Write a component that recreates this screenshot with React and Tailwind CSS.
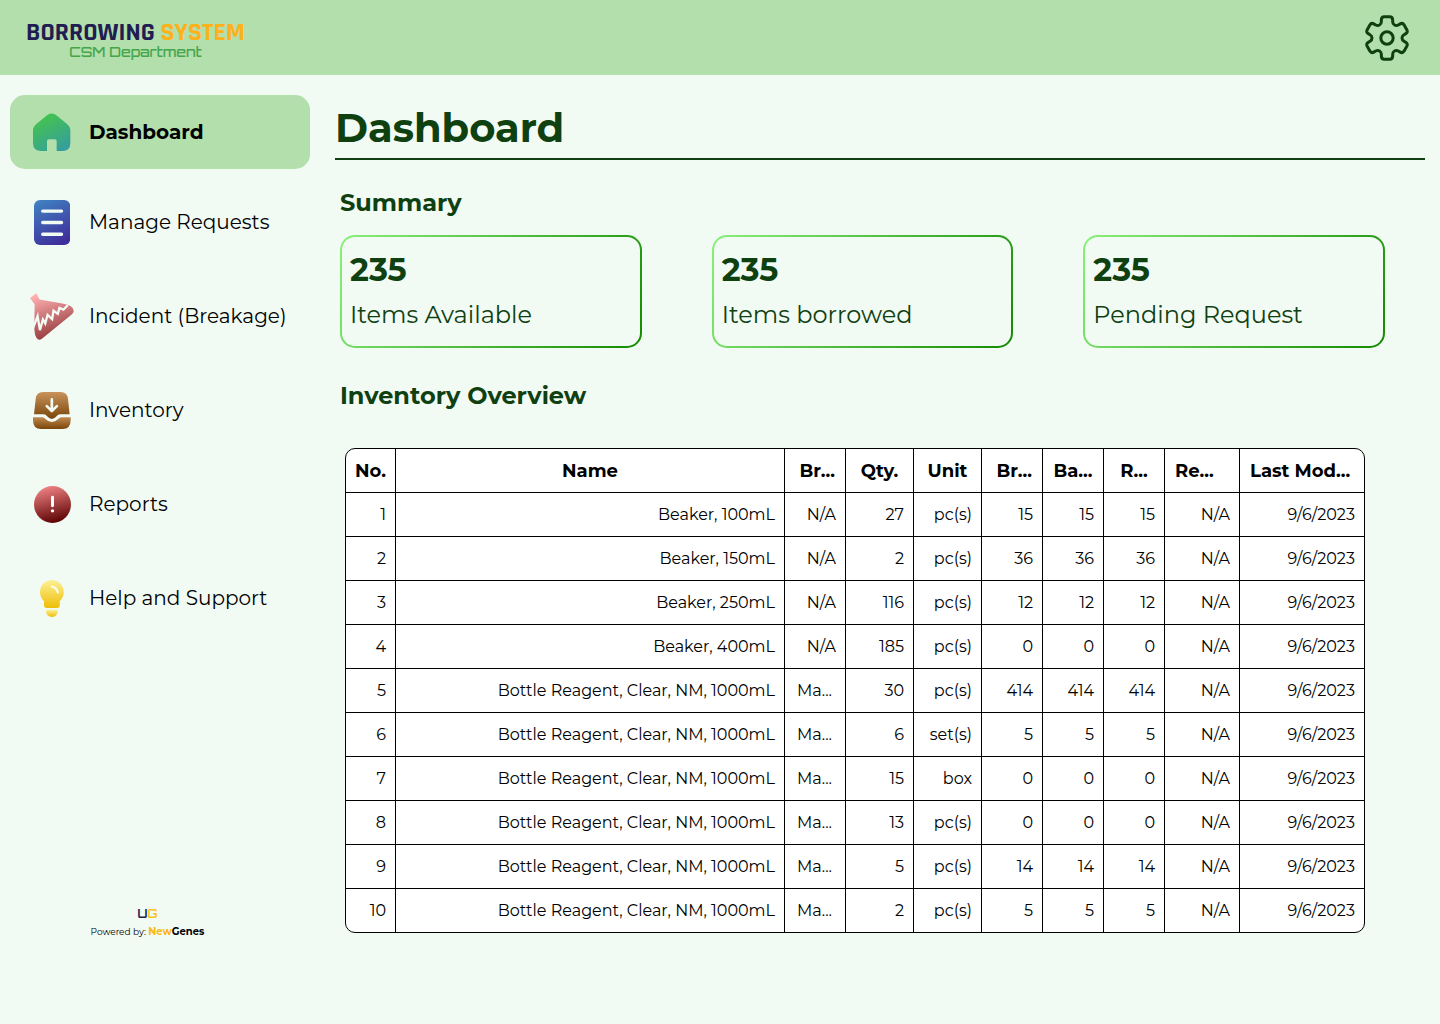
import React from "react";

const rotate = (deg, x, y) => {
  const a = (deg * Math.PI) / 180;
  const c = Math.cos(a);
  const s = Math.sin(a);
  return `${(x * c - y * s).toFixed(2)} ${(x * s + y * c).toFixed(2)}`;
};

const toothPath = (deg) => {
  const p = (x, y) => rotate(deg, x, y);
  return [
    `C ${p(-19, -41)} ${p(-17, -43)} ${p(-17, -49)}`,
    `L ${p(-17, -54)} Q ${p(-17, -64)} ${p(-8, -64)}`,
    `L ${p(8, -64)} Q ${p(17, -64)} ${p(17, -54)}`,
    `L ${p(17, -49)} C ${p(17, -43)} ${p(19, -41)} ${p(22.5, -39)}`,
  ].join(" ");
};

const gearPath = `M ${rotate(0, -22.5, -39)} ${[0, 60, 120, 180, 240, 300].map(toothPath).join(" ")} Z`;

function GearIcon() {
  return (
    <svg viewBox="-72 -72 144 144" className="size-12" fill="none" stroke="#0f4010" strokeWidth="9" strokeLinejoin="round">
      <path d={gearPath} />
      <circle r="18.5" />
    </svg>
  );
}

function HomeIcon() {
  return (
    <svg viewBox="0 0 112 114" className="h-[38px]">
      <defs>
        <linearGradient id="home" x1="0.25" y1="0" x2="0.8" y2="1">
          <stop offset="0.1" stopColor="#43c253" />
          <stop offset="1" stopColor="#359d9e" />
        </linearGradient>
      </defs>
      <path
        fill="url(#home)"
        d="M44 5Q56-2 68 5L102 33Q112 41 112 52V90Q112 114 88 114H71V85Q71 79 65 79H48Q42 79 42 85V114H24Q0 114 0 90V52Q0 41 10 33Z"
      />
    </svg>
  );
}

function RequestsIcon() {
  return (
    <svg viewBox="0 0 108 134" className="h-[45px]">
      <defs>
        <linearGradient id="requests" x1="0.2" y1="0" x2="0.6" y2="1">
          <stop offset="0" stopColor="#4080c0" />
          <stop offset="1" stopColor="#3f2f9c" />
        </linearGradient>
      </defs>
      <rect width="108" height="134" rx="18" fill="url(#requests)" />
      <path d="M26 33H82M26 67H82M26 102H82" stroke="#f1fbf4" strokeWidth="10" strokeLinecap="round" />
    </svg>
  );
}

function BreakageIcon() {
  return (
    <svg viewBox="0 0 132 142" className="h-[47px]">
      <defs>
        <linearGradient id="breakage" x1="0.3" y1="0" x2="0.6" y2="1">
          <stop offset="0" stopColor="#ffb0b0" />
          <stop offset="1" stopColor="#8f3236" />
        </linearGradient>
      </defs>
      <path
        fill="url(#breakage)"
        d="M0 15L19 1L29 20L98 32Q132 38 132 54Q132 60 126 65L36 138Q26 145 20 136Q13 126 13 102L14 34Z"
      />
      <path
        d="M10 104L23 70L30 112L39 80L46 92L53 66L67 79L71 53L84 63L89 45L101 50L114 37"
        fill="none"
        stroke="#f1fbf4"
        strokeWidth="7"
      />
    </svg>
  );
}

function InventoryIcon() {
  return (
    <svg viewBox="0 0 112 110" className="h-[37px]">
      <defs>
        <linearGradient id="boxTop" x1="0" y1="0" x2="0" y2="1">
          <stop offset="0" stopColor="#c9945c" />
          <stop offset="1" stopColor="#7a4508" />
        </linearGradient>
        <linearGradient id="boxBase" x1="0" y1="0" x2="0" y2="1">
          <stop offset="0" stopColor="#c08a50" />
          <stop offset="1" stopColor="#7a4508" />
        </linearGradient>
      </defs>
      <path fill="url(#boxTop)" d="M8 20Q10 0 30 0H82Q102 0 104 20L109 66H80Q74 66 70 72Q56 88 42 72Q38 66 32 66H3Z" />
      <path fill="url(#boxBase)" d="M0 75H28Q33 75 37 80Q56 99 75 80Q79 75 84 75H112V84Q112 110 88 110H24Q0 110 0 84Z" />
      <path d="M56 22V55M41 42L56 57L71 42" fill="none" stroke="#f1fbf4" strokeWidth="8" strokeLinecap="round" strokeLinejoin="round" />
    </svg>
  );
}

function ReportsIcon() {
  return (
    <svg viewBox="0 0 112 112" className="h-[37px]">
      <defs>
        <linearGradient id="reports" x1="0.35" y1="0" x2="0.6" y2="1">
          <stop offset="0" stopColor="#f08284" />
          <stop offset="1" stopColor="#5a0000" />
        </linearGradient>
      </defs>
      <circle cx="56" cy="56" r="56" fill="url(#reports)" />
      <path d="M56 34V60" stroke="#fff" strokeWidth="9" strokeLinecap="round" />
      <circle cx="56" cy="75" r="5" fill="#fff" />
    </svg>
  );
}

function HelpIcon() {
  return (
    <svg viewBox="0 0 72 112" className="h-[37px]">
      <defs>
        <linearGradient id="bulb" x1="0" y1="0" x2="0" y2="1">
          <stop offset="0" stopColor="#fdf196" />
          <stop offset="1" stopColor="#efbd06" />
        </linearGradient>
      </defs>
      <path fill="url(#bulb)" d="M36 0C56 0 72 16 72 37C72 50 66 57 60 64V75Q60 85 51 85H21Q12 85 12 75V64C6 57 0 50 0 37C0 16 16 0 36 0Z" />
      <path fill="url(#bulb)" d="M18 90H54Q54 112 36 112Q18 112 18 90Z" />
      <path d="M36 20Q50 22 54 37" fill="none" stroke="#fffbe0" strokeWidth="7" strokeLinecap="round" />
    </svg>
  );
}

const navItems = [
  { label: "Manage Requests", Icon: RequestsIcon },
  { label: "Incident (Breakage)", Icon: BreakageIcon },
  { label: "Inventory", Icon: InventoryIcon },
  { label: "Reports", Icon: ReportsIcon },
  { label: "Help and Support", Icon: HelpIcon },
];

const stats = [
  { value: 235, label: "Items Available" },
  { value: 235, label: "Items borrowed" },
  { value: 235, label: "Pending Request" },
];

const columns = [
  { label: "No.", head: "w-[50px] text-center" },
  { label: "Name", head: "text-center" },
  { label: "Br...", head: "w-[61px] pr-2.5 text-right" },
  { label: "Qty.", head: "w-[68px] text-center" },
  { label: "Unit", head: "w-[68px] text-center" },
  { label: "Br...", head: "w-[61px] pr-2.5 text-right" },
  { label: "Ba...", head: "w-[61px] text-center" },
  { label: "R...", head: "w-[61px] text-center" },
  { label: "Re...", head: "w-[75px] pl-2.5 text-left" },
  { label: "Last Mod...", head: "w-[124px] pl-2.5 text-left" },
];

const bottle = "Bottle Reagent, Clear, NM, 1000mL";
const rows = [
  ["Beaker, 100mL", "N/A", 27, "pc(s)", 15],
  ["Beaker, 150mL", "N/A", 2, "pc(s)", 36],
  ["Beaker, 250mL", "N/A", 116, "pc(s)", 12],
  ["Beaker, 400mL", "N/A", 185, "pc(s)", 0],
  [bottle, "Ma...", 30, "pc(s)", 414],
  [bottle, "Ma...", 6, "set(s)", 5],
  [bottle, "Ma...", 15, "box", 0],
  [bottle, "Ma...", 13, "pc(s)", 0],
  [bottle, "Ma...", 5, "pc(s)", 14],
  [bottle, "Ma...", 2, "pc(s)", 5],
];

function InventoryTable() {
  return (
    <div className="mt-9 mr-[60px] ml-2.5 overflow-hidden rounded-[10px] border border-black bg-white text-black">
      <table className="w-full table-fixed border-separate border-spacing-0">
        <thead>
          <tr className="h-11">
            {columns.map((c, i) => (
              <th key={i} scope="col" className={`border-r border-b border-black text-lg font-bold whitespace-nowrap last:border-r-0 ${c.head}`}>
                {c.label}
              </th>
            ))}
          </tr>
        </thead>
        <tbody className="[&>tr:last-child>td]:border-b-0">
          {rows.map(([name, brand, qty, unit, count], r) => (
            <tr key={r} className="h-11 last:h-[43px]">
              {[r + 1, name, brand, qty, unit, count, count, count, "N/A", "9/6/2023"].map((v, i) => (
                <td
                  key={i}
                  className={`border-r border-b border-black text-right text-base whitespace-nowrap last:border-r-0 ${v === "Ma..." ? "pr-[13px]" : "pr-[9px]"}`}
                >
                  {v}
                </td>
              ))}
            </tr>
          ))}
        </tbody>
      </table>
    </div>
  );
}

export default function App() {
  return (
    <div className="flex min-h-screen flex-col bg-[#f1fbf4] font-[Montserrat,Inter,sans-serif] text-black">
      <header className="flex h-[75px] items-center justify-between bg-[#b2dfab] pr-[29px] pl-[26px]">
        <div className="pt-1 text-center">
          <div className="font-[Rajdhani,Roboto,sans-serif] text-[26px] leading-6 font-bold text-[#211c52]">
            BORROWING <span className="text-[#fdb11a]">SYSTEM</span>
          </div>
          <div className="font-[Orbitron,'DejaVu_Sans',sans-serif] text-sm leading-3.5 font-medium text-[#45a54a]">CSM Department</div>
        </div>
        <button type="button" aria-label="Settings">
          <GearIcon />
        </button>
      </header>

      <div className="flex flex-1">
        <aside className="flex w-80 shrink-0 flex-col px-2.5 pt-5 pb-[84px]">
          <nav className="flex flex-col gap-3 text-xl">
            <a href="#dashboard" aria-current="page" className="flex h-[74px] items-center gap-3 rounded-[15px] bg-[#b2dfab] px-5 font-bold">
              <span className="flex w-11 justify-center">
                <HomeIcon />
              </span>
              <span className="pl-[3px]">Dashboard</span>
            </a>
            {navItems.map(({ label, Icon }) => (
              <a key={label} href="#section" className="flex h-[82px] items-center gap-3 px-5 whitespace-nowrap">
                <span className="flex w-11 justify-center">
                  <Icon />
                </span>
                <span className="pl-[3px]">{label}</span>
              </a>
            ))}
          </nav>
          <footer className="mt-auto ml-20 w-[115px] text-center text-[9px] leading-4 whitespace-nowrap">
            <div className="font-[Orbitron,Montserrat,sans-serif] text-xs leading-5 font-bold text-[#211c52]">
              U<span className="text-[#fcc419]">G</span>
            </div>
            Powered by: <span className="text-[10px] font-bold text-[#fdb813]">New</span>
            <span className="text-[10px] font-bold">Genes</span>
          </footer>
        </aside>

        <main className="min-w-0 flex-1 pt-7 pr-[15px] pb-20 pl-[15px] text-[#0f4010]">
          <h1 className="border-b-2 border-[#0f4010] pb-[5px] text-[40px] leading-[50px] font-bold">Dashboard</h1>
          <section className="pl-[5px]">
            <h2 className="mt-[27px] text-2xl font-bold">Summary</h2>
            <div className="mt-4 mr-10 grid grid-cols-3 gap-[70px]">
              {stats.map(({ value, label }) => (
                <div key={label} className="rounded-[15px] bg-linear-[120deg] from-[#8af07b] to-[#138a00] p-0.5">
                  <div className="h-[109px] rounded-[13px] bg-[#f1fbf4] px-2 pt-3">
                    <div className="text-[32px] leading-[42px] font-bold">{value}</div>
                    <div className="mt-2 text-2xl">{label}</div>
                  </div>
                </div>
              ))}
            </div>
            <h2 className="mt-8 text-2xl font-bold">Inventory Overview</h2>
          </section>
          <InventoryTable />
        </main>
      </div>
    </div>
  );
}
